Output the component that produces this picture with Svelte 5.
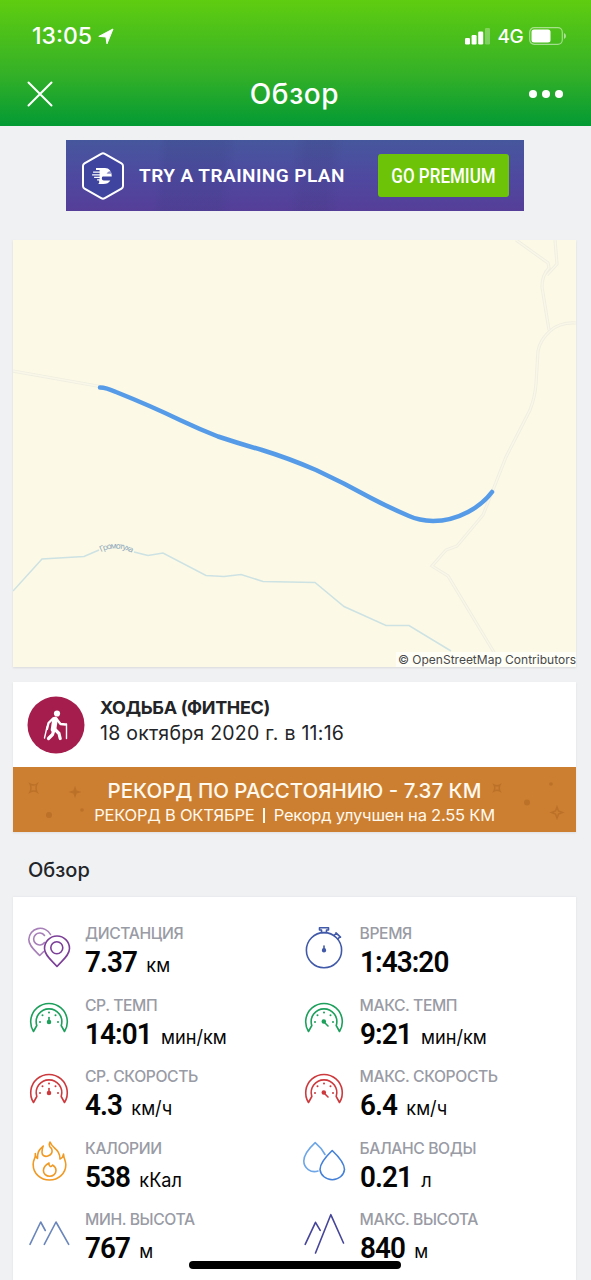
<script lang="ts">
  type Stat = {
    label: string;
    value: string;
    unit: string;
    icon: string;
    color: string;
  };

  const stats: Stat[] = [
    { label: 'ДИСТАНЦИЯ', value: '7.37', unit: 'км', icon: 'pins', color: '#7b3f98' },
    { label: 'ВРЕМЯ', value: '1:43:20', unit: '', icon: 'stopwatch', color: '#4059a8' },
    { label: 'СР. ТЕМП', value: '14:01', unit: 'мин/км', icon: 'gauge', color: '#1da05c' },
    { label: 'МАКС. ТЕМП', value: '9:21', unit: 'мин/км', icon: 'gauge-max', color: '#1da05c' },
    { label: 'СР. СКОРОСТЬ', value: '4.3', unit: 'км/ч', icon: 'gauge', color: '#cd3a3e' },
    { label: 'МАКС. СКОРОСТЬ', value: '6.4', unit: 'км/ч', icon: 'gauge-max', color: '#cd3a3e' },
    { label: 'КАЛОРИИ', value: '538', unit: 'кКал', icon: 'flame', color: '#f09a24' },
    { label: 'БАЛАНС ВОДЫ', value: '0.21', unit: 'л', icon: 'drops', color: '#4480d8' },
    { label: 'МИН. ВЫСОТА', value: '767', unit: 'м', icon: 'hills', color: '#6a86bb' },
    { label: 'МАКС. ВЫСОТА', value: '840', unit: 'м', icon: 'peaks', color: '#46459a' },
  ];
</script>

<div class="screen">
  <header>
    <div class="status">
      <span class="clock">13:05</span>
      <svg class="location" width="16" height="17" viewBox="0 0 16 17"><path d="M15 1 9 15.800 7.900 9 .8 8.400z" fill="#fff" stroke="#fff" stroke-width="1" stroke-linejoin="round" /></svg>
      <svg class="signal" width="25" height="17" viewBox="0 0 25 17" fill="#fff">
        <rect x="0" y="10" width="5" height="6.5" rx="1.2" />
        <rect x="6.6" y="7" width="5" height="9.5" rx="1.2" />
        <rect x="13.2" y="3.5" width="5" height="13" rx="1.2" />
        <rect x="20" y="0" width="5" height="16.5" rx="1.2" opacity=".3" />
      </svg>
      <span class="network">4G</span>
      <svg class="battery" width="38" height="18" viewBox="0 0 38 18">
        <rect x=".7" y=".7" width="32.6" height="16.6" rx="4.5" fill="none" stroke="#fff" stroke-opacity=".5" stroke-width="1.2" />
        <rect x="2.5" y="2.6" width="19" height="12.8" rx="2.5" fill="#fff" />
        <path d="M35 6v6q2-1 2-3t-2-3z" fill="#fff" opacity=".55" />
      </svg>
    </div>
    <div class="nav">
      <button aria-label="Закрыть">
        <svg width="26" height="26" viewBox="0 0 26 26"><path d="m1.5 1.5 23 23m0-23-23 23" stroke="#fff" stroke-width="2" stroke-linecap="round" /></svg>
      </button>
      <h1>Обзор</h1>
      <button aria-label="Ещё">
        <svg width="34" height="8" viewBox="0 0 34 8" fill="#fff"><circle cx="4" cy="4" r="4" /><circle cx="17" cy="4" r="4" /><circle cx="30" cy="4" r="4" /></svg>
      </button>
    </div>
  </header>

  <div class="promo">
    <svg class="badge" width="44" height="48" viewBox="0 0 44 48">
      <path d="M20.2 1.8q1.8-1 3.6 0l16.7 9.6q1.5.9 1.5 2.6v20q0 1.7-1.5 2.6l-16.7 9.6q-1.8 1-3.6 0L3.5 36.6Q2 35.7 2 34V14q0-1.7 1.5-2.6z" fill="#3f459f" stroke="#fff" stroke-width="2" />
      <path d="M15 16h9q6.500 0 6.800 8.500h-9q-1 0-1 2t2 2h6.500q-2 3.500-7 3.500h-5q1.500-1.500.8-3.500h-2v-1.300h2.500v-1.200h-5.500v-1.300h5.500v-1.200h-7.500v-1.300h7.500v-1.500h-6.500v-1.300h6.500v-1.400h-3.600z" fill="#fff" />
      <path d="M25.500 21.500q1.500-2.200 4-2.500l.7 2.700q-2.200.3-4.700-.2z" fill="#3f459f" opacity=".6" />
    </svg>
    <span class="promo-text">TRY A TRAINING PLAN</span>
    <button class="premium"><span>GO PREMIUM</span></button>
  </div>

  <section class="map">
    <svg width="563" height="427" viewBox="13 240 563 427" fill="none">
      <g stroke="#efeee0" stroke-width="3.2">
        <path d="M13 371l90 16" />
        <path d="M516 240l32 23 1 5q-7 7-7 19l7 43M555 240l2 24-10 11" />
        <path d="M576 323q-16-1-26 8-10 9-12 20l-2 33q-1 13-6 26l-24 47-15 38-8 20-26 31-11 4-14 16 16 10 47 78" />
      </g>
      <g stroke="#f9f7e8" stroke-width="1.4">
        <path d="M13 371l90 16M516 240l32 23 1 5q-7 7-7 19l7 43M555 240l2 24-10 11" />
        <path d="M576 323q-16-1-26 8-10 9-12 20l-2 33q-1 13-6 26l-24 47-15 38-8 20-26 31-11 4-14 16 16 10 47 78" />
      </g>
      <path d="M13 591l29-32 42-2.5 15-6.5M134 552l14 3.500 15-2.5 43 22.5 18 1 17-2 22 7 52 1 29 24 42 19h23l42 25.5" stroke="#cde2e3" stroke-width="1.5" />
      <path id="river" d="M101 552q16-8 33 2" />
      <text class="river-name"><textPath href="#river">Громотуха</textPath></text>
      <path d="M100 387.5q6 0 16 4.5 35 14 65 28.5 18 8.5 37 16 21 7 44 13.5 26 8 54 20 28 13 55 28 17 9 38 18 10 4.5 24 5 18 0 35-9 15-8 24-20" stroke="#559be8" stroke-width="4.5" stroke-linecap="round" />
    </svg>
    <span class="credit">© OpenStreetMap Contributors</span>
  </section>

  <section class="activity">
    <div class="activity-head">
      <svg width="58" height="58" viewBox="0 0 58 58">
        <circle cx="29" cy="29" r="28.5" fill="#a51d4c" />
        <circle cx="30" cy="17.5" r="3.1" fill="#fff" />
        <g stroke="#fff" fill="none" stroke-linecap="round" stroke-linejoin="round">
          <path d="M28 23.5l-1.5 10" stroke-width="5.5" />
          <path d="M26 22.5l-4.5 4.5-1.5 6M30 23.5l3.5 4.5 5 .5" stroke-width="2.3" />
          <path d="M27 34l-1.5 4.5-4 4M28 33.5l4 4 1.2 5" stroke-width="3.2" />
          <path d="M20 31l-2.5 11M39.5 28v14.5" stroke-width="1.4" />
        </g>
      </svg>
      <div class="activity-text">
        <h2>ХОДЬБА (ФИТНЕС)</h2>
        <p class="date">18 октября 2020 г. в 11:16</p>
      </div>
    </div>
    <div class="record">
      <svg class="sparks" width="563" height="65" viewBox="0 0 563 65" fill="#b46c25" stroke="#b46c25" stroke-width="1.5">
        <path d="M17 17q4 2 7 0-2 4 0 8-3-2-7 0 2-4 0-8zM481 18q3 1.5 6 0-1.5 3 0 6-3-1.5-6 0 1.5-3 0-6zM544 40l1.5 4 4 1.5-4 1.5-1.5 4-1.5-4-4-1.5 4-1.5z" fill="none" />
        <path d="M62 21l1 3 3 1-3 1-1 3-1-3-3-1 3-1z" />
        <g stroke="none"><circle cx="36" cy="48" r="3" /><circle cx="69" cy="43" r="1.8" /><circle cx="514" cy="35.5" r="3" /><circle cx="538" cy="17" r="1.8" /></g>
      </svg>
      <p class="record-title">РЕКОРД ПО РАССТОЯНИЮ - 7.37 КМ</p>
      <p class="record-note">РЕКОРД В ОКТЯБРЕ&nbsp; <i></i>&nbsp; Рекорд улучшен на 2.55 КМ</p>
    </div>
  </section>

  <h3>Обзор</h3>

  <section class="stats">
    {#each stats as stat (stat.label)}
      <div class="stat">
        <svg width="44" height="44" viewBox="0 0 44 44" fill="none" stroke={stat.color} stroke-width="1.6" stroke-linecap="round" stroke-linejoin="round">
          {#if stat.icon === 'pins'}
            <g stroke="#a67fb8">
              <path d="M22.5 8.5A11.5 11.5 0 0 0 .8 13.5C.8 20 7 24.5 11.7 29.500l4-4" />
              <path d="M16.5 9.5a6 6 0 1 0 0 7" />
            </g>
            <path d="M29 10a12.5 12.5 0 0 0-12.5 12.5C16.5 29.500 24 34.500 29 40.500 34 34.500 41.500 29.500 41.500 22.500A12.5 12.5 0 0 0 29 10z" />
            <circle cx="28.8" cy="21.7" r="6" />
          {:else if stat.icon === 'stopwatch'}
            <circle cx="21" cy="24.2" r="17.6" />
            <path d="M18.5 6.500V4h-2V1.700h9V4h-2v2.500z" fill="#fff" />
            <path d="M31 9.500l2.300-2.300M33 6.800l4.500 4.300M37 10.500l-2 2.500" />
            <path d="M21 20v4" />
            <circle cx="21" cy="24.3" r="1.4" fill={stat.color} />
          {:else if stat.icon === 'gauge' || stat.icon === 'gauge-max'}
            <path d="M5.500 33.500A18.300 18.300 0 1 1 36.500 33.500L33.200 27.500A12.800 12.800 0 1 0 8.800 27.500z" />
            <g fill={stat.color} stroke="none">
              <circle cx="12" cy="24" r="1" /><circle cx="14.5" cy="17.3" r="1" /><circle cx="21" cy="14.5" r="1" /><circle cx="27.5" cy="17.3" r="1" /><circle cx="30" cy="24" r="1" />
            </g>
            {#if stat.icon === 'gauge'}
              <path d="M21 19.500v5" />
              <circle cx="21" cy="24" r="1.5" fill={stat.color} />
            {:else}
              <path d="M21 24l4 4" />
              <circle cx="20.8" cy="23.5" r="1.5" fill={stat.color} />
            {/if}
          {:else if stat.icon === 'flame'}
            <path d="M15.200 5C10 9.500 9.500 12 9.500 17.500Q7 16 7.300 12.500C8 18 4.700 18 5.200 24a16.300 15 0 0 0 32.600 0c.2-4-2-6-2.300-11q-.5 4-3.500 5C32 8 24.500 8 22 1q-2 4 1.500 6.500c3.500 8-10 11-9.500 3.500Q14 8 15.200 5z" />
            <path d="M21 22q-.5 2 1 3.200 1.500.8 2.500-1.200 3.500 2 3.500 5.500a6.300 5.800 0 0 1-12.600 0Q15.500 25 21 22z" />
          {:else if stat.icon === 'drops'}
            <path d="M22 13.500Q18.500 7 12.200 1.700 1 12 .8 20a10.800 10.500 0 0 0 14.200 10" stroke="#6ea6e5" />
            <path d="M29.200 9.500C24 14.500 17 22 17 28.500a12.300 11.200 0 0 0 24.500 0c0-6.500-7-14-12.300-19z" />
          {:else if stat.icon === 'hills'}
            <path d="M2 32.300L12.700 10l4.600 8.500M16.300 32.300L28 10l12.700 22.300" />
          {:else}
            <path d="M2.200 32.300l10.300-22 4.700 8M12.500 41L27.800 2.700 40.500 31" />
          {/if}
        </svg>
        <div>
          <div class="label">{stat.label}</div>
          <div class="reading"><span class="value">{stat.value}</span><span class="unit">{stat.unit}</span></div>
        </div>
      </div>
    {/each}
  </section>

  <div class="home-bar"></div>
</div>

<style>
  :global(body) {
    margin: 0;
    background: #f0f1f3;
  }

  .screen {
    position: relative;
    box-sizing: border-box;
    width: 591px;
    height: 1280px;
    overflow: hidden;
    background: #f0f1f3;
    color: #222427;
    font-family: Inter, 'Liberation Sans', sans-serif;
  }

  h1, h2, h3, p {
    margin: 0;
  }

  button {
    border: 0;
    padding: 0;
    background: none;
    font-family: inherit;
  }

  svg {
    display: block;
    flex: none;
  }

  header {
    height: 126px;
    background: linear-gradient(#5fcd10, #35b127 58%, #039a34);
    color: #fff;
  }

  .status {
    display: flex;
    align-items: center;
    height: 72px;
    padding: 0 24px 0 32px;
  }

  .clock {
    width: 62px;
    font-size: 23px;
    font-weight: 500;
    white-space: nowrap;
  }

  .location {
    margin-left: 4px;
  }

  .signal {
    margin-left: auto;
  }

  .network {
    margin: 0 6px 0 8px;
    font-size: 19px;
    font-weight: 500;
    letter-spacing: -0.6px;
  }

  .nav {
    display: flex;
    align-items: center;
    justify-content: space-between;
    height: 44px;
    padding: 0 28px 0 27px;
  }

  h1 {
    margin-left: 7px;
    font-size: 28px;
    font-weight: 500;
    letter-spacing: 0.6px;
  }

  .promo {
    display: flex;
    align-items: center;
    box-sizing: border-box;
    width: 458px;
    height: 71px;
    margin: 14px auto 0 66px;
    padding: 0 15px;
    background: linear-gradient(95deg, transparent 20%, #39408033 22% 34%, transparent 37% 49%, #3d3c7a2e 52% 57%, transparent 60%), linear-gradient(#46579d, #4f48a0 55%, #553e98);
    color: #fff;
    font-family: Roboto, sans-serif;
  }

  .promo-text {
    margin-left: 14px;
    font-size: 19px;
    font-weight: 600;
    letter-spacing: 0.45px;
    white-space: nowrap;
  }

  .premium {
    width: 131px;
    height: 43px;
    margin-left: auto;
    border-radius: 3px;
    background: #6cc307;
    color: #fff;
    font-family: Roboto, sans-serif;
    font-size: 20px;
    font-weight: 500;
  }

  .premium span {
    display: block;
    transform: scaleX(0.85);
    white-space: nowrap;
  }

  .map {
    position: relative;
    width: 563px;
    height: 427px;
    margin: 29px 0 0 13px;
    background: #fcf9e6;
    box-shadow: 0 1px 2px #d8d9dc;
  }

  .river-name {
    fill: #8fa9bd;
    font-size: 8px;
    letter-spacing: -1.2px;
  }

  .credit {
    position: absolute;
    right: 0;
    bottom: 0;
    padding-left: 2px;
    background: #fffef6;
    color: #48494a;
    font-size: 12px;
    line-height: 15px;
    white-space: nowrap;
  }

  .activity {
    width: 563px;
    margin: 15px 0 0 13px;
    background: #fff;
    box-shadow: 0 1px 2px #dedfe2;
  }

  .activity-head {
    display: flex;
    align-items: center;
    gap: 15px;
    height: 85px;
    padding-left: 14px;
  }

  .activity-text {
    padding-bottom: 7px;
  }

  h2 {
    font-size: 18px;
    font-weight: 700;
    line-height: 24px;
    letter-spacing: -0.35px;
  }

  .date {
    font-size: 19.5px;
    line-height: 26px;
    letter-spacing: 0.25px;
    white-space: nowrap;
  }

  .record {
    position: relative;
    box-sizing: border-box;
    height: 65px;
    padding-top: 10px;
    background: #cc7f31;
    color: #fff9ee;
    text-align: center;
    white-space: nowrap;
  }

  .sparks {
    position: absolute;
    top: 0;
    left: 0;
    opacity: 0.7;
  }

  .record-title {
    font-size: 20.5px;
    font-weight: 500;
    line-height: 28px;
  }

  .record-note {
    font-size: 16.5px;
    line-height: 21px;
    letter-spacing: -0.22px;
  }

  .record-note i {
    display: inline-block;
    width: 1.5px;
    height: 15px;
    background: #fff9ee;
    vertical-align: -2px;
  }

  h3 {
    height: 65px;
    padding-left: 28px;
    font-size: 20px;
    font-weight: 500;
    line-height: 76px;
  }

  .stats {
    display: grid;
    grid-template-columns: 274.5px 1fr;
    grid-auto-rows: 71.5px;
    box-sizing: border-box;
    width: 563px;
    height: 400px;
    margin-left: 13px;
    padding: 29px 0 0 15px;
    background: #fff;
    box-shadow: 0 0 2px #dedfe2;
  }

  .stat {
    display: flex;
    align-items: flex-start;
    gap: 13px;
    white-space: nowrap;
  }

  .label {
    color: #999ba5;
    font-size: 15.7px;
    font-weight: 500;
    line-height: 16px;
    letter-spacing: -0.4px;
  }

  .reading {
    display: flex;
    align-items: baseline;
    color: #050505;
    line-height: 40px;
    transform: scaleX(0.93);
    transform-origin: left;
  }

  .value {
    font-family: Roboto, sans-serif;
    font-size: 30px;
    font-weight: 600;
    letter-spacing: -1px;
  }

  .unit {
    margin-left: 10px;
    font-size: 19.5px;
  }

  .home-bar {
    position: absolute;
    left: 189px;
    bottom: 11px;
    width: 212px;
    height: 8px;
    border-radius: 4px;
    background: #000;
  }
</style>
